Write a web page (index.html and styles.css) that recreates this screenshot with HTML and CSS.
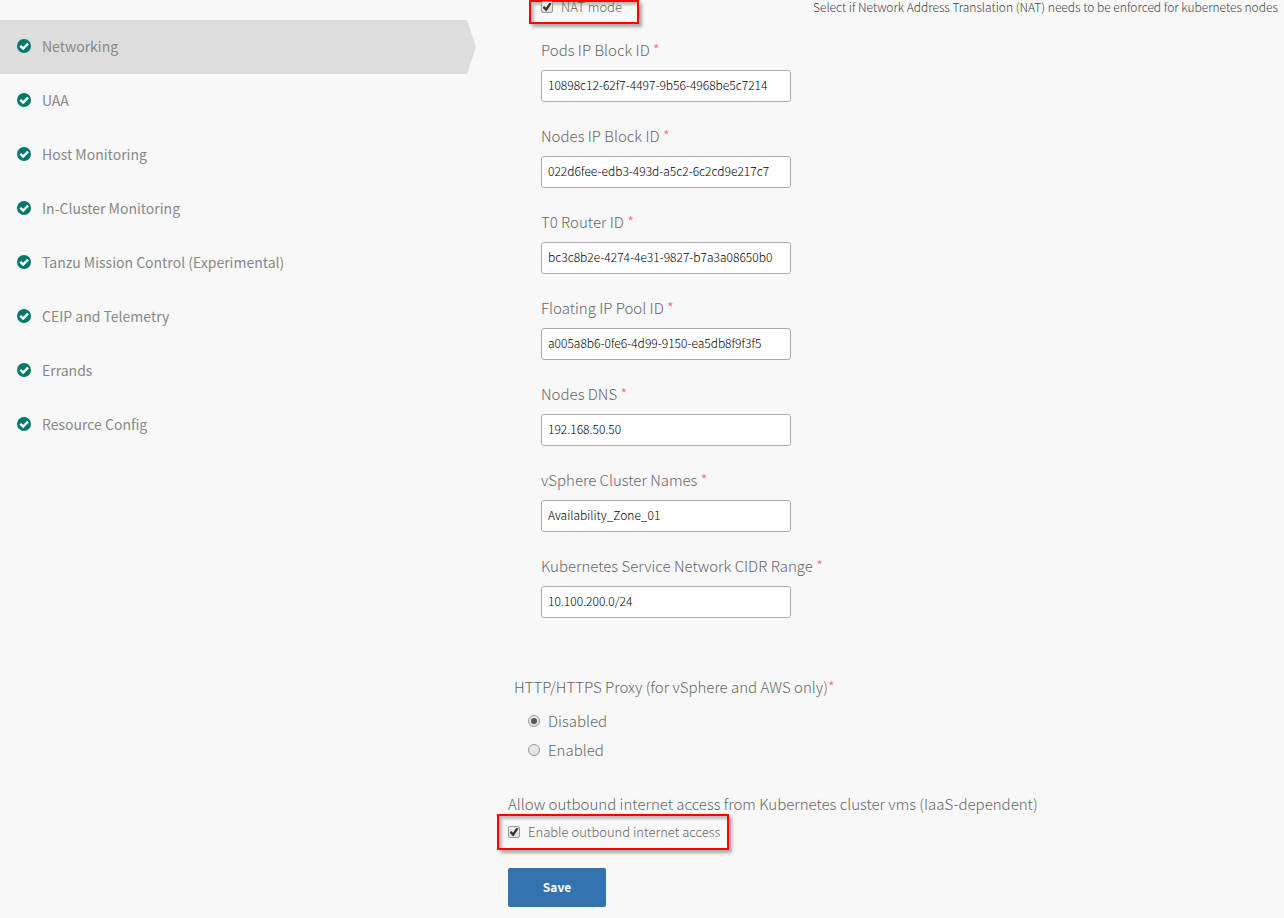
FILE: index.html
```
<!DOCTYPE html>
<html lang="en">
<head>
  <meta charset="UTF-8">
  <title>Networking</title>
  <link rel="stylesheet" href="styles.css">
</head>
<body>

  <svg class="defs" width="0" height="0" aria-hidden="true">
    <symbol id="check" viewBox="0 0 14 14">
      <circle cx="7" cy="7" r="7" fill="#00796b"/>
      <path d="M3.2 6.8L6.2 9.5L11 4.7" fill="none" stroke="#fff" stroke-width="2.4"/>
    </symbol>
  </svg>

  <div class="page">
    <nav class="sidebar">
      <a class="nav-item active" href="#"><svg class="icon"><use href="#check"/></svg>Networking</a>
      <a class="nav-item" href="#"><svg class="icon"><use href="#check"/></svg>UAA</a>
      <a class="nav-item" href="#"><svg class="icon"><use href="#check"/></svg>Host Monitoring</a>
      <a class="nav-item" href="#"><svg class="icon"><use href="#check"/></svg>In-Cluster Monitoring</a>
      <a class="nav-item" href="#"><svg class="icon"><use href="#check"/></svg>Tanzu Mission Control (Experimental)</a>
      <a class="nav-item" href="#"><svg class="icon"><use href="#check"/></svg>CEIP and Telemetry</a>
      <a class="nav-item" href="#"><svg class="icon"><use href="#check"/></svg>Errands</a>
      <a class="nav-item" href="#"><svg class="icon"><use href="#check"/></svg>Resource Config</a>
    </nav>

    <form class="content">
      <div class="nat-row">
        <label class="marked nat"><input type="checkbox" checked>NAT mode</label>
        <p class="help">Select if Network Address Translation (NAT) needs to be enforced for kubernetes nodes</p>
      </div>

      <div class="fields">
        <div class="field">
          <label for="pods">Pods IP Block ID <span class="req">*</span></label>
          <input id="pods" type="text" value="10898c12-62f7-4497-9b56-4968be5c7214">
        </div>
        <div class="field">
          <label for="nodes">Nodes IP Block ID <span class="req">*</span></label>
          <input id="nodes" type="text" value="022d6fee-edb3-493d-a5c2-6c2cd9e217c7">
        </div>
        <div class="field">
          <label for="router">T0 Router ID <span class="req">*</span></label>
          <input id="router" type="text" value="bc3c8b2e-4274-4e31-9827-b7a3a08650b0">
        </div>
        <div class="field">
          <label for="pool">Floating IP Pool ID <span class="req">*</span></label>
          <input id="pool" type="text" value="a005a8b6-0fe6-4d99-9150-ea5db8f9f3f5">
        </div>
        <div class="field">
          <label for="dns">Nodes DNS <span class="req">*</span></label>
          <input id="dns" type="text" value="192.168.50.50">
        </div>
        <div class="field">
          <label for="cluster">vSphere Cluster Names <span class="req">*</span></label>
          <input id="cluster" type="text" value="Availability_Zone_01">
        </div>
        <div class="field">
          <label for="cidr">Kubernetes Service Network CIDR Range <span class="req">*</span></label>
          <input id="cidr" type="text" value="10.100.200.0/24">
        </div>
      </div>

      <fieldset class="proxy">
        <legend>HTTP/HTTPS Proxy (for vSphere and AWS only)<span class="req">*</span></legend>
        <label><input type="radio" name="proxy" checked>Disabled</label>
        <label><input type="radio" name="proxy">Enabled</label>
      </fieldset>

      <div class="outbound">
        <p>Allow outbound internet access from Kubernetes cluster vms (IaaS-dependent)</p>
        <label class="marked"><input type="checkbox" checked>Enable outbound internet access</label>
      </div>

      <button class="save" type="submit">Save</button>
    </form>
  </div>

</body>
</html>
```
FILE: styles.css
```
* {
  box-sizing: border-box;
}
body {
  margin: 0;
  background: #f8f8f8;
  color: #666;
  font-family: "Noto Sans CJK SC", "Noto Sans", sans-serif;
  font-size: 15px;
  font-weight: 300;
  line-height: 20px;
}
p {
  margin: 0;
}
.defs {
  position: absolute;
}
.page {
  display: grid;
  grid-template-columns: 476px 1fr;
}

/* sidebar */
.sidebar {
  padding-top: 20px;
}
.nav-item {
  display: flex;
  align-items: center;
  gap: 11px;
  height: 54px;
  padding: 0 0 2px 17px;
  color: #888;
  font-size: 14px;
  font-weight: 400;
  text-decoration: none;
}
.nav-item.active {
  background: #ddd;
  clip-path: polygon(0 0, 467px 0, 100% 50%, 467px 100%, 0 100%);
}
.icon {
  width: 14px;
  height: 14px;
}

/* form */
.content {
  padding-left: 32px;
}
.nat-row {
  display: flex;
  gap: 174px;
}
.help {
  color: #444;
  font-size: 12px;
  line-height: 14px;
  white-space: nowrap;
}
.marked {
  display: inline-flex;
  align-items: center;
  gap: 8px;
  height: 36px;
  padding: 0 7px 0 9px;
  border: 2px solid #f00;
  box-shadow: 3px 3px 3px #aaa, inset 3px 3px 3px #bbb;
  font-size: 13px;
}
.nat {
  flex: none;
  width: 110px;
  height: 24px;
  margin-left: 21px;
  padding: 0 10px 10px;
}
.fields {
  display: grid;
  gap: 24px;
  padding: 16px 0 0 33px;
}
.field label {
  display: block;
  margin-bottom: 10px;
}
.field input {
  display: block;
  width: 250px;
  height: 32px;
  padding: 0 6px 4px;
  border: 1px solid #aaa;
  border-radius: 3px;
  background: #fff;
  color: #000;
  font-family: inherit;
  font-size: 12px;
  font-weight: 300;
}
.req {
  color: #f66;
}
.proxy {
  margin: 59px 0 0;
  padding: 0 0 0 20px;
  border: 0;
}
.proxy legend {
  margin: 0 0 14px -14px;
  padding: 0;
}
.proxy label {
  display: flex;
  align-items: center;
  gap: 8px;
  margin-bottom: 9px;
}
input[type="checkbox"],
input[type="radio"] {
  appearance: none;
  display: grid;
  place-items: center;
  flex: none;
  width: 12px;
  height: 12px;
  margin: 0;
  border: 1px solid #999;
  border-radius: 2px;
  background: linear-gradient(#eee, #ddd);
}
input[type="radio"] {
  border-radius: 50%;
}
input[type="radio"]:checked::before {
  content: "";
  width: 6px;
  height: 6px;
  border-radius: 50%;
  background: #555;
}
input[type="checkbox"]:checked::before {
  content: "";
  width: 9px;
  height: 9px;
  background: #333;
  clip-path: polygon(0 55%, 20% 38%, 38% 58%, 80% 0, 100% 15%, 42% 100%);
}
.outbound {
  margin-top: 25px;
}
.outbound .marked {
  margin-left: -11px;
}
.save {
  display: block;
  width: 98px;
  height: 39px;
  margin-top: 18px;
  padding: 0 0 3px;
  border: 0;
  border-radius: 2px;
  background: #3572b0;
  color: #fff;
  font-family: inherit;
  font-size: 12px;
  font-weight: 700;
}
```
